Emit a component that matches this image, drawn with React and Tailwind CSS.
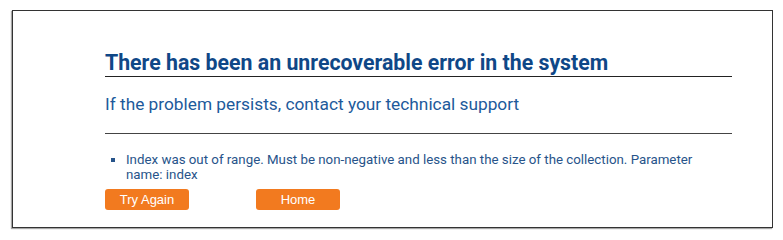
export default function App() {
  return (
    <div className="bg-white w-[783px] h-[238px] pt-[10px] pl-[12px]">
      <div
        className="w-[761px] h-[218px] border border-[#333] shadow-[-1px_1px_1px_rgba(0,0,0,0.35)] pl-[92px] pt-[39px]"
        style={{ fontFamily: 'Roboto, "Liberation Sans", sans-serif' }}
      >
        <div className="w-[627px]">
          <h1 className="text-[21.3px] leading-[26px] font-bold text-[#0f4787] border-b border-[#222]">
            There has been an unrecoverable error in the system
          </h1>
          <h2 className="text-[17.3px] leading-[22px] text-[#1d5a9b] mt-[16px]">
            If the problem persists, contact your technical support
          </h2>
          <hr className="border-0 border-t border-[#444] mt-[18px]" />
          <ul className="list-[square] pl-[21px] mt-[18px] w-[610px] text-[13.3px] leading-[15px] text-[#27548a] marker:text-[#27548a]">
            <li>
              Index was out of range. Must be non-negative and less than the size of the collection. Parameter name: index
            </li>
          </ul>
          <div
            className="flex gap-[67px] mt-[7px]"
            style={{ fontFamily: '"Liberation Sans", Arial, sans-serif' }}
          >
            <button className="w-[84px] h-[21px] rounded-[3px] bg-[#f27a1f] text-white text-[13px] leading-[21px]">
              Try Again
            </button>
            <button className="w-[84px] h-[21px] rounded-[3px] bg-[#f27a1f] text-white text-[13px] leading-[21px]">
              Home
            </button>
          </div>
        </div>
      </div>
    </div>
  );
}
